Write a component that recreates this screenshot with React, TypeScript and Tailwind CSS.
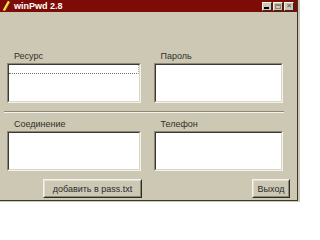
import React from "react";

const font = { fontFamily: '"Liberation Sans", Arial, sans-serif' };

function Sunken({ className = "", children }: { className?: string; children?: React.ReactNode }) {
  return (
    <div className={`border border-t-[#8c8875] border-l-[#8c8875] border-b-[#f4f2ea] border-r-[#f4f2ea] ${className}`}>
      <div className="h-full w-full border border-t-[#3c3a30] border-l-[#3c3a30] border-b-[#dcd8c6] border-r-[#dcd8c6] bg-white">
        {children}
      </div>
    </div>
  );
}

function Raised({ className = "", children }: { className?: string; children?: React.ReactNode }) {
  return (
    <div className={`border border-t-[#f4f2ea] border-l-[#f4f2ea] border-b-[#2e2c24] border-r-[#2e2c24] ${className}`}>
      <div className="h-full w-full border border-t-[#e4e0d0] border-l-[#e4e0d0] border-b-[#8c8875] border-r-[#8c8875] bg-[#ccc8b4] flex items-center justify-center whitespace-nowrap text-[9px] leading-[10px] text-[#2a2a2a]">
        {children}
      </div>
    </div>
  );
}

function TitleBtn({ children }: { children?: React.ReactNode }) {
  return (
    <div className="w-[10px] h-[9px] bg-[#ccc8b4] border border-t-[#f4f2ea] border-l-[#f4f2ea] border-b-[#2e2c24] border-r-[#2e2c24] flex items-center justify-center">
      {children}
    </div>
  );
}

export default function App() {
  return (
    <div className="w-[300px] h-[202px] bg-[#ccc8b4] overflow-hidden" style={font}>
      <div className="w-[298px] h-[201px] border-r border-b border-r-[#3a382e] border-b-[#3a382e] flex flex-col">
        <div className="h-[12px] bg-[#7e0c06] flex items-center pl-[2px] pr-[2px]">
          <svg width="9" height="10" viewBox="0 0 9 10">
            <path d="M6 0 L8 1 L3 10 L1 9 Z" fill="#e8d020" />
            <path d="M6 0 L7 0.5 L2 9.5 L1 9 Z" fill="#f8f070" />
          </svg>
          <span className="ml-[3px] text-[9px] leading-[12px] font-bold text-white">winPwd 2.8</span>
          <div className="flex-1" />
          <div className="flex items-center gap-[1px] mr-[1px]">
            <TitleBtn>
              <div className="w-[5px] h-[2px] bg-black mt-[4px] mr-[1px]" />
            </TitleBtn>
            <TitleBtn>
              <div className="w-[6px] h-[5px] border border-[#8c8875] border-t-2" />
            </TitleBtn>
            <TitleBtn>
              <span className="text-[8px] leading-[8px] text-[#6a6858] font-bold">×</span>
            </TitleBtn>
          </div>
        </div>

        <div className="flex flex-col pl-[7px] pr-[14px]">
          <div className="flex gap-[13px] mt-[39px]">
            <div className="w-[135px] flex flex-col">
              <div className="h-[12px] pl-[7px] text-[9px] leading-[11px] text-[#333028]">Ресурс</div>
              <Sunken className="h-[40px]">
                <div className="h-[9px] border-b border-dotted border-b-[#707070] border-r border-r-[#a8a8a8]" />
              </Sunken>
            </div>
            <div className="w-[129px] flex flex-col">
              <div className="h-[12px] pl-[6px] text-[9px] leading-[11px] text-[#333028]">Пароль</div>
              <Sunken className="h-[40px]" />
            </div>
          </div>

          <div className="mt-[8px] ml-[-3px] mr-[-1px] border-t border-t-[#8c8875] border-b border-b-[#f4f2ea]" />

          <div className="flex gap-[13px] mt-[6px]">
            <div className="w-[135px] flex flex-col">
              <div className="h-[12px] pl-[7px] text-[9px] leading-[11px] text-[#333028]">Соединение</div>
              <Sunken className="h-[40px]" />
            </div>
            <div className="w-[129px] flex flex-col">
              <div className="h-[12px] pl-[6px] text-[9px] leading-[11px] text-[#333028]">Телефон</div>
              <Sunken className="h-[40px]" />
            </div>
          </div>

          <div className="flex mt-[8px]">
            <Raised className="ml-[36px] w-[99px] h-[19px]">добавить в pass.txt</Raised>
            <div className="flex-1" />
            <Raised className="mr-[-7px] w-[38px] h-[19px]">Выход</Raised>
          </div>
        </div>
      </div>
    </div>
  );
}
